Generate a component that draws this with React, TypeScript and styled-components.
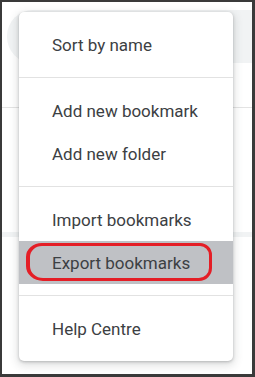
import React from 'react';
import styled, { createGlobalStyle } from 'styled-components';

const GlobalStyle = createGlobalStyle`
  html, body {
    margin: 0;
    padding: 0;
    background: #ffffff;
  }
  body {
    font-family: Roboto, "Liberation Sans", Arial, sans-serif;
  }
`;

const Frame = styled.div`
  position: relative;
  width: 255px;
  height: 377px;
  box-sizing: border-box;
  border: 2px solid #3a3a3a;
  border-right-width: 3px;
  border-bottom-width: 3px;
  background: #ffffff;
  overflow: hidden;
`;

const Backdrop = styled.div`
  display: flex;
  flex-direction: column;
  padding-top: 8px;
`;

const SearchPill = styled.div`
  margin-left: 5px;
  height: 53px;
  width: 300px;
  border-radius: 26px;
  background: #f1f3f4;
`;

const Rule = styled.div<{ $top: number; $height?: number; $color?: string }>`
  margin-top: ${(p) => p.$top}px;
  height: ${(p) => p.$height ?? 1}px;
  background: ${(p) => p.$color ?? '#e3e3e3'};
`;

const Menu = styled.div`
  position: absolute;
  left: 17px;
  top: 10px;
  width: 214px;
  background: #ffffff;
  border-radius: 5px;
  box-shadow: 0 1px 3px rgba(60, 64, 67, 0.3), 0 3px 8px 2px rgba(60, 64, 67, 0.15);
  padding: 11px 0;
  box-sizing: border-box;
`;

const Section = styled.div`
  display: flex;
  flex-direction: column;
`;

const Divider = styled.div`
  height: 1px;
  background: #e2e2e2;
  margin: 11px 0;
`;

const Item = styled.div<{ $active?: boolean }>`
  position: relative;
  height: 43px;
  display: flex;
  align-items: center;
  padding-left: 33px;
  font-size: 17px;
  color: #3c4043;
  background: ${(p) => (p.$active ? '#bfc1c5' : 'transparent')};
`;

const Circled = styled.div`
  position: absolute;
  left: 7px;
  top: 2px;
  width: 186px;
  height: 38px;
  box-sizing: border-box;
  border: 3px solid #e41e26;
  border-left-width: 4px;
  border-radius: 16px 12px 13px 17px / 14px 12px 13px 15px;
  pointer-events: none;
`;

export default function App() {
  return (
    <>
      <GlobalStyle />
      <Frame>
        <Backdrop>
          <SearchPill />
          <Rule $top={44} />
          <Rule $top={124} $height={5} $color="#f1f3f4" />
        </Backdrop>
        <Menu>
          <Section>
            <Item>Sort by name</Item>
          </Section>
          <Divider />
          <Section>
            <Item>Add new bookmark</Item>
            <Item>Add new folder</Item>
          </Section>
          <Divider />
          <Section>
            <Item>Import bookmarks</Item>
            <Item $active>
              Export bookmarks
              <Circled />
            </Item>
          </Section>
          <Divider />
          <Section>
            <Item>Help Centre</Item>
          </Section>
        </Menu>
      </Frame>
    </>
  );
}
